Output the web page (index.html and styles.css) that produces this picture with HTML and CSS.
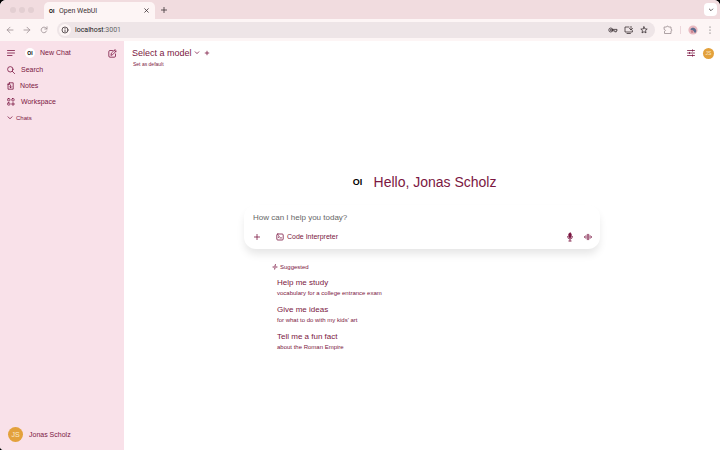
FILE: index.html
```html
<!DOCTYPE html>
<html lang="en">
<head>
  <meta charset="UTF-8">
  <title>Open WebUI</title>
  <link rel="stylesheet" href="styles.css">
</head>
<body>
  <div class="window">
    <!-- Browser chrome -->
    <header class="tabs">
      <div class="lights"><i></i><i></i><i></i></div>
      <div class="tab">
        <span class="favicon">OI</span>
        <span class="tab-title">Open WebUI</span>
        <button class="tab-close" aria-label="Close tab"><svg width="5" height="5" viewBox="0 0 5 5"><path d="M.7.7l3.600 3.600M4.300.7L.7 4.300"/></svg></button>
      </div>
      <button class="new-tab" aria-label="New tab"><svg width="6" height="6" viewBox="0 0 6 6"><path d="M3 .4v5.200M.4 3h5.200"/></svg></button>
      <button class="tab-search" aria-label="Search tabs"><svg width="6" height="4" viewBox="0 0 6 4"><path d="M1.300 1L3 2.700 4.700 1"/></svg></button>
    </header>
    <div class="toolbar">
      <div class="nav">
        <button aria-label="Back"><svg width="8" height="8" viewBox="0 0 8 8"><path d="M7 4H1.200M4 1.200L1.200 4 4 6.800"/></svg></button>
        <button aria-label="Forward"><svg width="8" height="8" viewBox="0 0 8 8"><path d="M1 4h5.800M4 1.200L6.800 4 4 6.800"/></svg></button>
        <button aria-label="Reload"><svg width="8" height="8" viewBox="0 0 8 8"><path d="M6.600 5A2.800 2.800 0 1 1 6.200 2.200L7 3M7 .8V3H4.800"/></svg></button>
      </div>
      <div class="omnibox">
        <button class="site-info" aria-label="Site information"><svg width="8" height="8" viewBox="0 0 8 8"><circle cx="4" cy="4" r="3"/><path d="M4 3.900v1.700M4 2.300v.2"/></svg></button>
        <span class="url">localhost<span class="port">:3001</span></span>
        <button aria-label="Passwords"><svg width="10" height="8" viewBox="0 0 10 8"><circle cx="2.800" cy="4" r="2"/><circle cx="2.800" cy="4" r=".5"/><path d="M4.800 3.400H9v1.400h-.7v1H6.800v-1h-2"/></svg></button>
        <button aria-label="Install app"><svg width="10" height="8" viewBox="0 0 10 8"><path d="M5 1H1v5h7.400V4.600M3 7.500h3.400M7 .4v3.400M5.500 2.500L7 4l1.600-1.500"/></svg></button>
        <button aria-label="Bookmark"><svg width="8" height="8" viewBox="0 0 8 8"><path d="M4 .8l.9 2.100 2.300.2-1.700 1.500.5 2.300L4 5.700 2 6.900l.5-2.300L.8 3.100l2.300-.2z"/></svg></button>
      </div>
      <button class="ext" aria-label="Extensions"><svg width="10" height="10" viewBox="0 0 10 10"><path d="M1.500 2h2C3.500.8 5.500.8 5.500 2H8v2.300c1.200 0 1.200 1.600 0 1.600V8.500H1.500V6.300c1.200 0 1.200-1.900 0-1.900z"/></svg></button>
      <span class="divider"></span>
      <button class="profile" aria-label="Profile"><svg width="10" height="10" viewBox="0 0 10 10"><circle class="disc" cx="5" cy="5" r="4.600"/><path class="blue" d="M2.300 4.500C3 2.500 6 2 7.500 4s.8 3-.5 4.200L5.500 6z"/><path class="tan" d="M2.500 5.500L5 5l.5 2.500-2 .8z"/></svg></button>
      <button class="dots" aria-label="Menu"><svg width="2" height="8" viewBox="0 0 2 8"><circle cx="1" cy="1" r=".6"/><circle cx="1" cy="4" r=".6"/><circle cx="1" cy="7" r=".6"/></svg></button>
    </div>

    <!-- App -->
    <div class="app">
      <aside class="sidebar">
        <div class="side-head">
          <button aria-label="Toggle sidebar"><svg width="8" height="8" viewBox="0 0 8 8"><path d="M.5 1.500h7M.5 4h7M.5 6.500h4.500"/></svg></button>
          <a class="new-chat" href="#"><span class="logo">OI</span>New Chat</a>
          <button class="compose" aria-label="New chat"><svg width="9" height="9" viewBox="0 0 9 9"><path d="M4.500 1.500H2A1.200 1.200 0 0 0 .8 2.700V7A1.200 1.200 0 0 0 2 8.200h4.300A1.200 1.200 0 0 0 7.500 7V5M3 6l.4-1.900L7 .6l1.400 1.300-3.600 3.600zM6.200 1.400l1.400 1.400"/></svg></button>
        </div>
        <nav class="side-nav">
          <a href="#"><svg width="8" height="8" viewBox="0 0 8 8"><circle cx="3.300" cy="3.300" r="2.700"/><path d="M5.300 5.300l2.300 2.300"/></svg>Search</a>
          <a href="#"><svg width="7" height="8" viewBox="0 0 7 8"><path d="M2.300.8h3.900v6.400H1V2.200zM2.500 1v1.500H1M3.600 3v2.700M2.500 4.700l1.100 1.100 1.100-1.100"/></svg>Notes</a>
          <a href="#"><svg width="8" height="8" viewBox="0 0 8 8"><rect x=".6" y=".6" width="2.300" height="2.300" rx=".7"/><rect x="4.800" y=".6" width="2.300" height="2.300" rx=".7"/><rect x=".6" y="4.800" width="2.300" height="2.300" rx=".7"/><path d="M6 4.500v3M4.500 6h3"/></svg>Workspace</a>
        </nav>
        <button class="chats"><svg width="6" height="4" viewBox="0 0 6 4"><path d="M1 .8l2 2 2-2"/></svg>Chats</button>
        <button class="user"><span class="avatar large">JS</span>Jonas Scholz</button>
      </aside>

      <main class="main">
        <div class="topbar">
          <div class="model">
            <div class="model-row">
              <button class="model-name">Select a model<svg width="6" height="4" viewBox="0 0 6 4"><path d="M1.200.8L3 2.600 4.800.8"/></svg></button>
              <button aria-label="Add model"><svg width="6" height="6" viewBox="0 0 6 6"><path d="M3 1.200v3.600M1.200 3h3.600"/></svg></button>
            </div>
            <button class="default">Set as default</button>
          </div>
          <div class="actions">
            <button aria-label="Controls"><svg width="8" height="8" viewBox="0 0 8 8"><path d="M.5 1.500h7M.5 4h7M.5 6.500h7M5.500.8v1.400M2.500 3.300v1.400M5.500 5.800v1.400"/></svg></button>
            <button class="avatar" aria-label="Account">JS</button>
          </div>
        </div>

        <section class="welcome">
          <div class="greeting">
            <span class="logo big">OI</span>
            <h1>Hello, Jonas Scholz</h1>
          </div>
          <form class="composer">
            <input type="text" aria-label="Message" placeholder="How can I help you today?">
            <div class="tools">
              <button type="button" aria-label="More"><svg width="8" height="8" viewBox="0 0 8 8"><path d="M4 1.400v5.200M1.400 4h5.200"/></svg></button>
              <button type="button" class="interpreter"><svg width="8" height="8" viewBox="0 0 8 8"><rect x=".8" y="1" width="6.400" height="6" rx="1"/><path d="M2.200 2.600l1.200 1-1.200 1M4 4.900h1.500"/></svg>Code Interpreter</button>
              <div class="voice">
                <button type="button" aria-label="Dictate"><svg width="8" height="10" viewBox="0 0 8 10"><rect class="fill" x="2.800" y="1" width="2.400" height="4.800" rx="1.200"/><path d="M1.500 4.500a2.500 2.500 0 0 0 5 0M4 7v2M2.800 9h2.400"/></svg></button>
                <button type="button" aria-label="Voice mode"><svg width="8" height="8" viewBox="0 0 8 8"><path d="M.5 3.600v.8M1.900 2.700v2.600M3.300 1.300v5.400M4.700 1.300v5.400M6.100 2.700v2.600M7.500 3.600v.8"/></svg></button>
              </div>
            </div>
          </form>
          <div class="suggestions">
            <div class="suggested"><svg width="6" height="6" viewBox="0 0 6 6"><path d="M3.400.5L2.500 2.600.6 3l1.900.5.100 2L3.500 3.500 5.400 3l-1.900-.4z"/></svg>Suggested</div>
            <button><b>Help me study</b><span>vocabulary for a college entrance exam</span></button>
            <button><b>Give me ideas</b><span>for what to do with my kids' art</span></button>
            <button><b>Tell me a fun fact</b><span>about the Roman Empire</span></button>
          </div>
        </section>
      </main>
    </div>
  </div>
</body>
</html>
```
FILE: styles.css
```css
* {
  box-sizing: border-box;
}

body {
  margin: 0;
  background: #000;
  font-family: "Liberation Sans", Arial, sans-serif;
  font-size: 7px;
  line-height: 10px;
  color: #7b1742;
}

button, input {
  padding: 0;
  border: none;
  background: none;
  font: inherit;
  color: inherit;
}

button {
  display: flex;
  align-items: center;
  cursor: pointer;
}

a {
  color: inherit;
  text-decoration: none;
}

svg {
  flex: none;
  fill: none;
  stroke: currentColor;
  stroke-width: 0.8;
  stroke-linecap: round;
  stroke-linejoin: round;
}

.window {
  display: flex;
  flex-direction: column;
  min-height: 100vh;
  border-radius: 6px 6px 0 4px;
  overflow: hidden;
  background: #fff;
}

/* Browser chrome */
.tabs {
  display: flex;
  align-items: center;
  height: 19px;
  padding: 0 3px 0 10px;
  background: #f1dcdf;
  color: #3a3034;
}

.lights {
  display: flex;
  gap: 3px;
  width: 34px;
}

.lights i {
  width: 6px;
  height: 6px;
  border-radius: 50%;
  background: #e3cfd2;
}

.tab {
  display: flex;
  align-items: center;
  align-self: flex-end;
  width: 111px;
  height: 17px;
  padding: 0 6px 0 5px;
  border-radius: 5px 5px 0 0;
  background: #fdf5f5;
}

.favicon {
  width: 10px;
  font-size: 5px;
  font-weight: 700;
  color: #000;
}

.tab-title {
  flex: 1;
  font-family: Roboto, sans-serif;
}

.new-tab {
  margin-left: 6px;
}

.tab-search {
  justify-content: center;
  width: 13px;
  height: 13px;
  margin-left: auto;
  border-radius: 4px;
  background: #fff;
}

.toolbar {
  display: flex;
  align-items: center;
  height: 22px;
  padding: 0 9px 0 6px;
  background: #fdf5f5;
  color: #3a3034;
}

.nav {
  display: flex;
  gap: 9px;
  color: #998d90;
}

.omnibox {
  display: flex;
  flex: 1;
  align-items: center;
  gap: 6px;
  height: 16px;
  margin: 0 8px 0 9px;
  padding: 0 7px 0 2px;
  border-radius: 8px;
  background: #eee5e7;
}

.site-info {
  justify-content: center;
  width: 12px;
  height: 12px;
  border-radius: 50%;
  background: #fdf5f5;
}

.url {
  flex: 1;
  margin-left: -2px;
  font-family: Roboto, sans-serif;
  color: #222;
}

.port {
  color: #666;
}

.ext {
  color: #998d90;
}

.divider {
  width: 1px;
  height: 8px;
  margin: 0 7px;
  background: #ecd6da;
}

.profile svg {
  stroke: none;
}

.disc {
  fill: #e9b9c0;
}

.blue {
  fill: #5d6c8f;
}

.tan {
  fill: #c98590;
}

.dots {
  margin-left: 11px;
}

.dots svg {
  fill: #555;
  stroke: none;
}

/* App */
.app {
  display: flex;
  flex: 1;
}

.sidebar {
  display: flex;
  flex: 0 0 124px;
  flex-direction: column;
  padding: 4px 7px 8px;
  background: #f9e1e9;
}

.side-head {
  display: flex;
  align-items: center;
  gap: 10px;
  height: 16px;
  margin-bottom: 1px;
}

.new-chat {
  display: flex;
  flex: 1;
  align-items: center;
  gap: 5px;
}

.logo {
  width: 10px;
  height: 10px;
  border-radius: 50%;
  background: #fff;
  font-size: 5px;
  font-weight: 700;
  text-align: center;
  color: #000;
}

.side-nav a {
  display: flex;
  align-items: center;
  gap: 6px;
  height: 16px;
}

.chats {
  gap: 3px;
  height: 16px;
  font-size: 6px;
}

.user {
  gap: 6px;
  margin: auto 0 0 1px;
}

.avatar {
  display: flex;
  align-items: center;
  justify-content: center;
  width: 11px;
  height: 11px;
  border-radius: 50%;
  background: #e3a13c;
  font-size: 5px;
  color: #fbe9cc;
}

.avatar.large {
  width: 15px;
  height: 15px;
  font-size: 7px;
}

.main {
  flex: 1;
  min-width: 0;
}

.topbar {
  display: flex;
  align-items: flex-start;
  justify-content: space-between;
  padding: 6px 6px 0 8px;
}

.model-row {
  display: flex;
  align-items: center;
  gap: 4px;
  height: 12px;
  font-size: 9px;
}

.model-name {
  gap: 2px;
}

.default {
  margin-left: 1px;
  font-size: 5px;
}

.actions {
  display: flex;
  align-items: center;
  gap: 8px;
  height: 12px;
}

/* Welcome area */
.welcome {
  padding: 0 20px;
  margin-top: 104px;
}

.greeting {
  display: flex;
  align-items: center;
  justify-content: center;
  gap: 8px;
  padding-left: 2px;
}

h1 {
  margin: 0;
  font-size: 14px;
  font-weight: 400;
  line-height: 18px;
}

.logo.big {
  width: 16px;
  height: 16px;
  font-size: 9px;
  line-height: 16px;
}

.composer {
  max-width: 356px;
  margin: 14px auto 0;
  padding: 6px 8px 6px 9px;
  border-radius: 12px;
  background: #fff;
  box-shadow: 0 6px 8px -1px rgba(0, 0, 0, 0.1);
}

.composer input {
  display: block;
  width: 100%;
  height: 12px;
  font-size: 8px;
  outline: none;
}

.composer input::placeholder {
  color: #666;
  opacity: 1;
}

.tools {
  display: flex;
  align-items: center;
  gap: 15px;
  height: 12px;
  margin-top: 8px;
}

.interpreter {
  gap: 3px;
}

.voice {
  display: flex;
  align-items: center;
  gap: 10px;
  margin-left: auto;
}

.fill {
  fill: currentColor;
}

.suggestions {
  max-width: 300px;
  margin: 13px auto 0;
}

.suggested {
  display: flex;
  align-items: center;
  gap: 2px;
  margin-bottom: 6px;
  font-size: 6px;
}

.suggested svg {
  stroke-width: 0.5;
}

.suggestions button {
  flex-direction: column;
  align-items: flex-start;
  width: 100%;
  height: 20px;
  margin-bottom: 7px;
  padding-left: 5px;
  text-align: left;
}

.suggestions b {
  font-size: 8px;
  font-weight: 400;
}

.suggestions span {
  font-size: 6px;
}
```
